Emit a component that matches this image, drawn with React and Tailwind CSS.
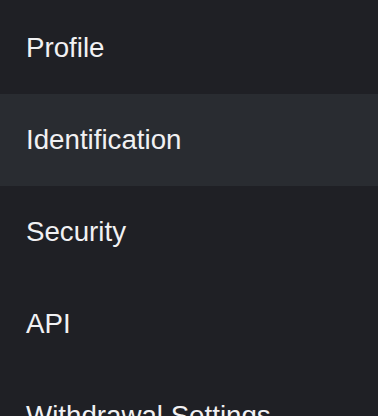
import React from 'react';

const items = ['Profile', 'Identification', 'Security', 'API', 'Withdrawal Settings'];

const App = () => {
  const active = 'Identification';

  return (
    <div className="h-[416px] w-full overflow-hidden bg-[#1f2025] pt-[2px] font-['Liberation_Sans',Arial,sans-serif]">
      <ul className="flex flex-col">
        {items.map((item) => (
          <li
            key={item}
            className={`flex h-[92px] items-center px-[26px] text-[27.7px] text-[#f1f1f3] ${
              item === active ? 'bg-[#292c31]' : ''
            }`}
          >
            {item}
          </li>
        ))}
      </ul>
    </div>
  );
};

export default App;
